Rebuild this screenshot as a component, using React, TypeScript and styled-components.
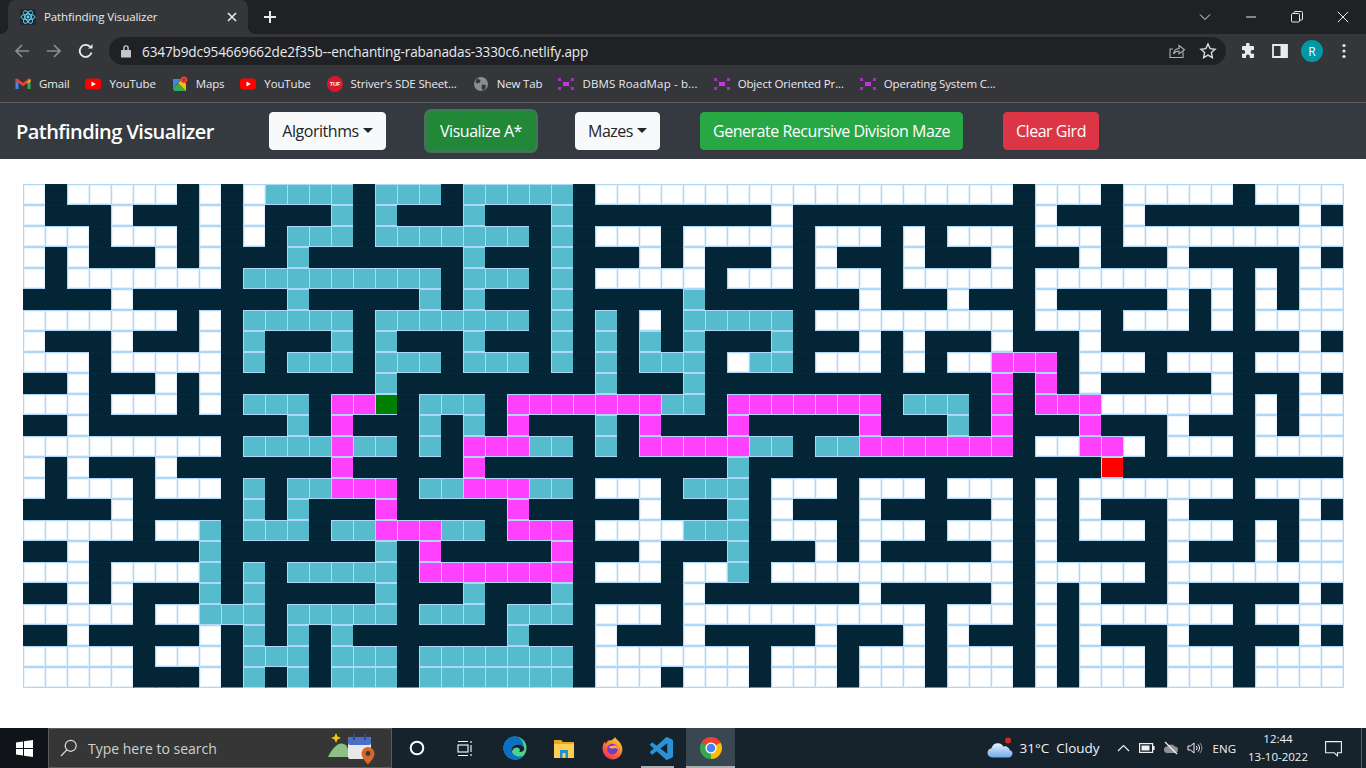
import React from "react";
import styled, { createGlobalStyle } from "styled-components";

const UI_FONT = `"Open Sans", "Noto Sans", "Liberation Sans", sans-serif`;

const Global = createGlobalStyle`
  html, body { margin: 0; padding: 0; height: 100%; background: #fff; overflow: hidden; }
  #root { height: 100%; }
  * { box-sizing: border-box; }
  body { font-family: ${UI_FONT}; }
`;

const Page = styled.div`
  width: 1366px;
  height: 768px;
  display: flex;
  flex-direction: column;
`;

/* ---------- browser chrome ---------- */
const TabStrip = styled.div`
  height: 34px;
  background: #202124;
  display: flex;
  align-items: flex-end;
  padding-left: 8px;
`;
const Tab = styled.div`
  position: relative;
  width: 240px;
  height: 34px;
  background: #35363a;
  border-radius: 8px 8px 0 0;
  display: flex;
  align-items: center;
  padding: 0 8px 0 12px;
  gap: 8px;
  &::before, &::after {
    content: "";
    position: absolute;
    bottom: 0;
    width: 8px;
    height: 8px;
  }
  &::before { left: -8px; background: radial-gradient(circle at 0 0, #202124 8px, #35363a 8.5px); }
  &::after { right: -8px; background: radial-gradient(circle at 100% 0, #202124 8px, #35363a 8.5px); }
`;
const TabTitle = styled.span`
  flex: 1;
  margin-top: -2px;
  color: #e8eaed;
  font-size: 11.5px;
  letter-spacing: -0.1px;
  white-space: nowrap;
`;
const ChromeIcon = styled.span<{ $color?: string }>`
  display: inline-flex;
  align-items: center;
  justify-content: center;
  flex: none;
  color: ${(p) => p.$color || "#e8eaed"};
`;
const NewTab = styled(ChromeIcon)`
  margin: 0 0 0 14px;
  height: 34px;
`;
const WindowControls = styled.div`
  margin-left: auto;
  height: 34px;
  display: flex;
  align-items: center;
`;
const WindowButton = styled(ChromeIcon)`
  width: 46px;
  height: 28px;
`;
const Toolbar = styled.div`
  height: 34px;
  background: #35363a;
  display: flex;
  align-items: center;
  padding-left: 12px;
`;
const NavRound = styled(ChromeIcon)`
  width: 20px;
  height: 20px;
  margin-right: 12px;
`;
const Omnibox = styled.div`
  width: 1117px;
  height: 28px;
  margin-left: 1px;
  border-radius: 14px;
  background: #202124;
  display: flex;
  align-items: center;
  padding-left: 11px;
`;
const Url = styled.span`
  color: #e8eaed;
  font-size: 13.6px;
  letter-spacing: -0.14px;
  margin-left: 10px;
  flex: 1;
  white-space: nowrap;
`;
const OmniEnd = styled.div`
  display: flex;
  align-items: center;
  gap: 13px;
  padding-right: 9px;
`;
const ToolEnd = styled.div`
  display: flex;
  align-items: center;
  margin-left: 14px;
  gap: 16px;
`;
const Avatar = styled.span`
  width: 22px;
  height: 22px;
  margin: 0 3px 0 -3px;
  border-radius: 50%;
  background: #0097a7;
  color: #fff;
  font-size: 12px;
  display: flex;
  align-items: center;
  justify-content: center;
`;
const Bookmarks = styled.div`
  height: 35px;
  background: #35363a;
  border-bottom: 1px solid #5f6062;
  display: flex;
  align-items: center;
  padding: 0 0 3px 15px;
  gap: 16px;
`;
const Bookmark = styled.div<{ $track?: number }>`
  display: flex;
  align-items: center;
  gap: 8px;
  color: #e8eaed;
  font-size: 11.5px;
  letter-spacing: ${(p) => p.$track ?? -0.15}px;
  white-space: nowrap;
`;

/* ---------- app navbar ---------- */
const Navbar = styled.nav`
  height: 56px;
  background: #343a40;
  display: flex;
  align-items: center;
  padding-left: 16px;
`;
const Brand = styled.span`
  font-size: 20px;
  font-weight: 600;
  letter-spacing: -0.55px;
  color: #fff;
  width: 253px;
  white-space: nowrap;
`;
const Actions = styled.div`
  display: flex;
  gap: 40px;
`;
const tones = {
  light: { bg: "#f8f9fa", fg: "#212529" },
  focus: { bg: "#218838", fg: "#fff" },
  success: { bg: "#28a745", fg: "#fff" },
  danger: { bg: "#dc3545", fg: "#fff" },
};
const Btn = styled.button<{ $tone: keyof typeof tones; $w: number }>`
  width: ${(p) => p.$w}px;
  height: 38px;
  margin-left: ${(p) => (p.$tone === "focus" ? 1 : 0)}px;
  border: 1px solid ${(p) => tones[p.$tone].bg};
  border-radius: 4px;
  background: ${(p) => tones[p.$tone].bg};
  color: ${(p) => tones[p.$tone].fg};
  font-family: ${UI_FONT};
  font-size: 16px;
  letter-spacing: -0.47px;
  padding: 0;
  white-space: nowrap;
  box-shadow: ${(p) => (p.$tone === "focus" ? "0 0 0 3px rgba(72,180,97,.5)" : "none")};
`;
const Caret = styled.span`
  display: inline-block;
  margin-left: 4px;
  vertical-align: 4px;
  border-top: 5px solid currentColor;
  border-left: 5px solid transparent;
  border-right: 5px solid transparent;
`;

/* ---------- maze ---------- */
const Main = styled.main`
  flex: 1;
  background: #fff;
  padding: 25px 0 0 23px;
`;
const Board = styled.div`
  display: grid;
  grid-template-columns: repeat(60, 22px);
  grid-auto-rows: 21px;
  width: 1321px;
  border-right: 1px solid #afd8f8;
`;
const cellColors = {
  ".": "#ffffff",
  W: "#032535",
  v: "#57bbce",
  p: "#ff40ff",
  S: "#008000",
  E: "#ff0000",
};
type Kind = keyof typeof cellColors;
const Cell = styled.div<{ $kind: Kind }>`
  background: ${(p) => cellColors[p.$kind]};
  border-style: solid;
  border-width: 1px 0 1px 1px;
  border-color: ${(p) => (p.$kind === "W" ? "#072a3a #032535 #032535 #032535" : "#afd8f8")};
  box-shadow: ${(p) => (p.$kind === "." ? "inset 1px 1px 0 #ecf5fd, inset -1px -1px 0 #e3f1fc" : "none")};
  &:nth-last-child(-n + 60) {
    border-bottom-color: ${(p) => (p.$kind === "W" ? "#7c8c95" : "#afd8f8")};
  }
`;

const MAZE = [
  "0. 1W 2. 7W 8. 9W 10. 11v 15W 16v 19W 20v 25W 26. 45W 46. 49W 50. 55W 56.",
  "0. 1W 4. 5W 8. 9W 10. 11W 14v 15W 16v 17W 20v 21W 24v 25W 34. 35W 46. 47W 50. 51W 58. 59W",
  "0. 3W 4. 7W 8. 9W 10. 11W 12v 15W 16v 23W 24v 25W 26. 29W 30. 35W 36. 39W 40. 41W 42. 45W 46. 49W 50.",
  "0. 1W 2. 3W 6. 7W 8. 9W 12v 13W 20v 21W 24v 25W 28. 29W 30. 31W 34. 35W 36. 37W 40. 41W 44. 45W 48. 49W 52. 53W 58. 59W",
  "0. 1W 2. 9W 10v 19W 20v 23W 24v 25W 26. 31W 32. 35W 36. 39W 40. 45W 46. 55W 56. 57W 58.",
  "0W 4. 5W 12v 13W 18v 19W 20v 21W 24v 25W 30v 31W 38. 39W 42. 43W 46. 47W 52. 53W 54. 55W 56. 57W 58.",
  "0. 7W 8. 9W 10v 15W 16v 23W 24v 25W 26v 27W 28. 29W 30v 35W 36. 45W 46. 49W 50. 53W 54. 55W 56.",
  "0. 1W 4. 5W 8. 9W 10v 11W 14v 15W 16v 17W 20v 21W 24v 25W 26v 27W 28v 29W 30v 31W 34v 35W 38. 39W 40. 41W 44. 45W 48. 49W 58. 59W",
  "0. 3W 4. 9W 10v 11W 12v 15W 16v 19W 20v 23W 24v 25W 26v 27W 28v 31W 32. 33v 35W 36. 39W 40. 41W 42. 44p 47W 48. 51W 52. 55W 56.",
  "0W 2. 3W 6. 7W 8. 9W 16v 17W 26v 27W 30v 31W 44p 45W 46p 47W 48. 49W 54. 55W 58. 59W",
  "0. 3W 4. 7W 8. 9W 10v 13W 14p 16S 17W 18v 21W 22p 29v 31W 32p 39W 40v 43W 44p 45W 46p 49. 55W 56. 57W 58.",
  "0W 2. 3W 12v 13W 14p 15W 18v 19W 20v 21W 22p 23W 26v 27W 28p 29W 32p 33W 38p 39W 42v 43W 44p 45W 48p 49W 52. 53W 56. 57W 58.",
  "0. 9W 10v 14p 15v 17W 18v 19W 20p 23v 25W 26v 27W 28p 33v 35W 36v 38p 45W 46. 48p 50. 51W 52. 55W 56.",
  "0. 1W 2. 3W 6. 7W 14p 15W 20p 21W 32v 33W 49E 50W",
  "0. 1W 2. 5W 6. 9W 10v 11W 12v 14p 17W 18v 20p 23v 25W 26. 29W 30v 33W 34. 37W 38. 41W 42. 45W 46. 47W 48. 55W 56.",
  "0W 4. 5W 10v 11W 12v 13W 16p 17W 22p 23W 28. 29W 32v 33W 34. 35W 38. 39W 44. 45W 46. 47W 48. 49W 52. 53W 58. 59W",
  "0. 5W 6. 8v 9W 10v 13W 14v 16p 19v 21W 22p 25W 26. 30v 33W 34. 37W 38. 41W 42. 45W 46. 47W 48. 51W 52. 55W 56. 57W 58.",
  "0W 2. 3W 8v 9W 16v 17W 18p 19W 24p 25W 28. 29W 32v 33W 36. 37W 38. 39W 44. 45W 46. 47W 52. 53W 56. 57W 58.",
  "0. 3W 4. 8v 9W 10v 11W 12v 17W 18p 25W 26. 29W 30. 32v 33W 34. 45W 46. 51W 52.",
  "0W 2. 3W 4. 5W 8v 9W 10v 11W 16v 17W 20v 21W 24v 25W 30. 31W 38. 39W 44. 45W 46. 47W 48. 49W 52. 53W 58. 59W",
  "0. 5W 6. 8v 11W 12v 17W 18v 21W 22v 25W 26. 29W 30. 41W 42. 45W 46. 47W 48. 55W 56.",
  "0W 2. 3W 8. 9W 10v 11W 12v 13W 14v 15W 22v 23W 26. 27W 30. 31W 36. 37W 40. 41W 42. 43W 46. 47W 48. 49W 52. 53W 58. 59W",
  "0. 5W 6. 9W 10v 13W 14v 17W 18v 25W 26. 33W 34. 37W 38. 41W 42. 45W 46. 47W 48. 51W 52. 55W 56.",
  "0. 5W 8. 9W 10v 11W 12v 13W 14v 17W 18v 25W 26. 29W 30. 33W 34. 37W 38. 41W 42. 45W 46. 47W 48. 51W 52. 55W 56.",
];

function expandRow(spec: string): Kind[] {
  const row: Kind[] = new Array(60).fill(".");
  const runs = spec.split(" ").map((t) => ({ at: parseInt(t, 10), kind: t.slice(-1) as Kind }));
  runs.forEach((r, i) => {
    const end = i + 1 < runs.length ? runs[i + 1].at : 60;
    for (let c = r.at; c < end; c++) row[c] = r.kind;
  });
  return row;
}
const cells = MAZE.flatMap(expandRow);

/* ---------- taskbar ---------- */
const Taskbar = styled.footer`
  height: 40px;
  background: #16222c;
  display: flex;
  align-items: center;
  color: #fff;
`;
const StartButton = styled.div`
  width: 48px;
  height: 40px;
  background: #101318;
  display: flex;
  align-items: center;
  justify-content: center;
`;
const SearchBox = styled.div`
  width: 344px;
  height: 40px;
  background: #363636;
  border: 1px solid #5c5c5c;
  display: flex;
  align-items: center;
  padding: 0 13px 0 11px;
`;
const SearchText = styled.span`
  margin-left: 10px;
  flex: 1;
  font-size: 14px;
  color: #d0d0d0;
  white-space: nowrap;
`;
const TaskIcon = styled.div<{ $active?: boolean; $running?: boolean }>`
  position: relative;
  width: 49px;
  height: 40px;
  display: flex;
  align-items: center;
  justify-content: center;
  background: ${(p) => (p.$active ? "#3b4750" : "transparent")};
  &::after {
    content: "";
    display: ${(p) => (p.$active || p.$running ? "block" : "none")};
    position: absolute;
    bottom: 0;
    left: ${(p) => (p.$active ? 0 : "4px")};
    right: ${(p) => (p.$active ? 0 : "12px")};
    height: 2px;
    background: #a9b0b5;
  }
`;
const Tray = styled.div`
  margin-left: auto;
  height: 40px;
  display: flex;
  align-items: center;
  padding-right: 4px;
`;
const Weather = styled.span`
  font-size: 13.5px;
  color: #f2f2f2;
  white-space: nowrap;
  margin-left: 7px;
`;
const TrayIcon = styled.span<{ $left: number }>`
  display: inline-flex;
  margin-left: ${(p) => p.$left}px;
  color: #f2f2f2;
`;
const Lang = styled.span`
  font-size: 11.5px;
  color: #f2f2f2;
  margin-left: 10px;
`;
const Clock = styled.div`
  width: 70px;
  margin-left: 7px;
  text-align: center;
  font-size: 11.5px;
  line-height: 18px;
  color: #f2f2f2;
`;
const EndEdge = styled.div`
  width: 1px;
  height: 40px;
  margin-left: 19px;
  background: #56616a;
`;

/* ---------- drawn icons ---------- */
const ReactFav = () => (
  <svg width="16" height="16" viewBox="0 0 16 16">
    <rect width="16" height="16" rx="2" fill="#20292f" />
    <g fill="none" stroke="#61dafb" strokeWidth="0.9">
      <ellipse cx="8" cy="8" rx="7" ry="2.8" />
      <ellipse cx="8" cy="8" rx="7" ry="2.8" transform="rotate(60 8 8)" />
      <ellipse cx="8" cy="8" rx="7" ry="2.8" transform="rotate(120 8 8)" />
    </g>
    <circle cx="8" cy="8" r="1.4" fill="#61dafb" />
  </svg>
);
const Gmail = () => (
  <svg width="16" height="16" viewBox="0 0 16 16">
    <rect x="0.5" y="3" width="3" height="10" fill="#4285f4" />
    <rect x="12.5" y="3" width="3" height="10" fill="#34a853" />
    <path d="M1 3.4 8 8.6 15 3.4" fill="none" stroke="#ea4335" strokeWidth="2.6" />
    <path d="M12.5 5.5 15.5 3.2V5.5L12.5 7.6Z" fill="#fbbc04" />
  </svg>
);
const YouTube = () => (
  <svg width="16" height="16" viewBox="0 0 16 16">
    <rect y="2.5" width="16" height="11" rx="3" fill="#f00" />
    <path d="M6.5 5.5 10.8 8 6.5 10.5Z" fill="#fff" />
  </svg>
);
const Maps = () => (
  <svg width="16" height="16" viewBox="0 0 16 16">
    <path d="M1 3 9 3 1 12Z" fill="#4285f4" />
    <path d="M1 12 6 7 14 15H2Z" fill="#34a853" />
    <path d="M6 7 10 3 14 8V15Z" fill="#fbbc04" />
    <circle cx="12" cy="3.8" r="3.3" fill="#ea4335" />
    <circle cx="12" cy="3.8" r="1.2" fill="#a52714" />
  </svg>
);
const Tuf = () => (
  <svg width="16" height="16" viewBox="0 0 16 16">
    <circle cx="8" cy="8" r="8" fill="#d8192d" />
    <text x="8" y="10" fontSize="5.6" fontWeight="700" fill="#fff" textAnchor="middle" fontFamily="Liberation Sans">TUF</text>
  </svg>
);
const Globe = () => (
  <svg width="16" height="16" viewBox="0 0 16 16">
    <circle cx="8" cy="8" r="7" fill="#8a8d91" />
    <path d="M4 2.5 7.5 4 7 6.5 4 7.5 2.5 6ZM9 8.5 13 9 12 13 9.5 14.5 8.5 11.5Z" fill="#35363a" />
  </svg>
);
const RoadMap = () => (
  <svg width="16" height="16" viewBox="0 0 16 16">
    <g fill="#a62fc0">
      <rect x="0" y="2" width="3" height="3" />
      <rect x="13" y="2" width="3" height="3" />
      <rect x="0" y="11" width="3" height="3" />
      <rect x="13" y="11" width="3" height="3" />
      <rect x="5" y="6" width="6" height="4" fill="#c237dd" />
    </g>
    <path d="M3 4 5 6M13 4 11 6M3 12 5 10M13 12 11 10" stroke="#6a2a7a" strokeWidth="1" />
  </svg>
);
const WindowsLogo = () => (
  <svg width="17" height="17" viewBox="0 0 17 17" fill="#fff">
    <path d="M0 2.4 7 1.4V8H0ZM8 1.3 17 0V8H8ZM0 9H7V15.6L0 14.6ZM8 9H17V17L8 15.7Z" />
  </svg>
);
const Magnifier = () => (
  <svg width="18" height="18" viewBox="0 0 18 18" fill="none" stroke="#e0e0e0" strokeWidth="1.2">
    <circle cx="10.7" cy="6.8" r="5.5" />
    <path d="M6.8 10.8 1 17" />
  </svg>
);
const CalendarWidget = () => (
  <svg width="50" height="34" viewBox="0 0 50 34">
    <path d="M0 26 C6 14 12 10 18 14 L24 26Z" fill="#8cc084" />
    <path d="M8 2 L9.5 5.5 13 7 9.5 8.5 8 12 6.5 8.5 3 7 6.5 5.5Z" fill="#f2c311" />
    <rect x="20" y="6" width="23" height="22" rx="2" fill="#e8e8e8" />
    <rect x="20" y="6" width="23" height="8" rx="2" fill="#4a6fc4" />
    <rect x="25" y="3" width="2" height="6" fill="#2c4a94" />
    <rect x="36" y="3" width="2" height="6" fill="#2c4a94" />
    <path d="M40 16 A6.5 6.5 0 0 1 46.5 22.5 C46.5 27 42 31 40 33.5 C38 31 33.5 27 33.5 22.5 A6.5 6.5 0 0 1 40 16Z" fill="#d9662a" />
    <circle cx="40" cy="22.5" r="2.4" fill="#3a3a3a" />
  </svg>
);
const Cortana = () => (
  <svg width="16" height="16" viewBox="0 0 16 16">
    <circle cx="8" cy="8" r="6.3" fill="none" stroke="#fff" strokeWidth="2" />
  </svg>
);
const TaskView = () => (
  <svg width="17" height="17" viewBox="0 0 17 17" fill="none" stroke="#fff" strokeWidth="1.1">
    <rect x="1" y="5" width="10" height="7" />
    <path d="M1 1.5H11M1 15.5H11M14 1V3M14 5V12M14 14V16" />
  </svg>
);
const Edge = () => (
  <svg width="24" height="24" viewBox="0 0 24 24">
    <defs>
      <linearGradient id="edgeA" x1="0" y1="0" x2="1" y2="1">
        <stop offset="0" stopColor="#37c6d0" />
        <stop offset="1" stopColor="#5ad76e" />
      </linearGradient>
    </defs>
    <circle cx="12" cy="12" r="11.5" fill="url(#edgeA)" />
    <path d="M12 .5C5.5 .5.5 5.6.5 12c0 6.4 5 11.5 11.5 11.5 3.4 0 6.4-1.4 8.6-3.8-4.8 1.7-10 .2-11.6-3.8-1.2-3.1.4-6.3 3.7-7.2 3-.8 6 .2 8 2.2C20.5 5.2 16.8.5 12 .5Z" fill="#0c70c4" />
    <path d="M8.8 15.9c-1-3.4 1-6.5 4.4-7.2 2.6-.5 5.4.3 7.3 2.1.8 1 1 2.5.2 3.7-1 1.4-3 1.6-4.6 1.3 1-1 1-2.4.1-3.3-2.1-2-6.4-.8-7.4 3.4Z" fill="#16222c" />
  </svg>
);
const Folder = () => (
  <svg width="22" height="22" viewBox="0 0 22 22">
    <path d="M1 3H8L10 5H21V10H1Z" fill="#e9a825" />
    <rect x="1" y="7" width="20" height="14" fill="#ffcf52" />
    <rect x="7" y="13" width="8" height="8" fill="#1f8fd6" />
    <rect x="9.5" y="16" width="3" height="5" fill="#ffcf52" />
  </svg>
);
const Firefox = () => (
  <svg width="24" height="24" viewBox="0 0 24 24">
    <defs>
      <linearGradient id="ffA" x1="0.8" y1="0" x2="0.2" y2="1">
        <stop offset="0" stopColor="#ffd23a" />
        <stop offset="0.5" stopColor="#ff7a2a" />
        <stop offset="1" stopColor="#e8286b" />
      </linearGradient>
    </defs>
    <path d="M14 .8c.5 2.4 2.5 3 4 4.6 3.2 3.2 4.4 8 2.6 12.2C18.8 21.4 15.4 23.5 12 23.5 6 23.5 1.5 18.6 1.5 12.6c0-2.6.8-5 2.4-7 .1 1 .5 1.8 1 2.4C5.6 5.2 8 3.8 10 4.4 11.5 3.5 13.4 2.6 14 .8Z" fill="url(#ffA)" />
    <circle cx="11.5" cy="13" r="5.3" fill="#7539c7" />
    <path d="M8 10c2 1 2.5-1 6-.5 2 .6 3 2 3 3.5-2-1.5-3.5-1-5-.5C10 12.8 8 12 8 10Z" fill="#ffb03a" />
  </svg>
);
const VsCode = () => (
  <svg width="23" height="23" viewBox="0 0 24 24" fill="#2c92d8">
    <path d="M23.15 2.587L18.21.21a1.494 1.494 0 0 0-1.705.29l-9.46 8.63-4.12-3.128a.999.999 0 0 0-1.276.057L.327 7.261A1 1 0 0 0 .326 8.74L3.899 12 .326 15.26a1 1 0 0 0 .001 1.479L1.65 17.94a.999.999 0 0 0 1.276.057l4.12-3.128 9.46 8.63a1.492 1.492 0 0 0 1.704.29l4.942-2.377A1.5 1.5 0 0 0 24 20.06V3.939a1.5 1.5 0 0 0-.85-1.352zm-5.146 14.861L10.826 12l7.178-5.448v10.896z" />
  </svg>
);
const Chrome = () => (
  <svg width="24" height="24" viewBox="0 0 24 24">
    <path d="M12 12 2.47 6.5A11 11 0 0 1 21.53 6.5Z" fill="#ea4335" />
    <path d="M12 12 21.53 6.5A11 11 0 0 1 12 23Z" fill="#fbbc04" />
    <path d="M12 12 12 23A11 11 0 0 1 2.47 6.5Z" fill="#34a853" />
    <circle cx="12" cy="12" r="5.6" fill="#fff" />
    <circle cx="12" cy="12" r="4.3" fill="#4285f4" />
  </svg>
);
const CloudIcon = () => (
  <svg width="26" height="22" viewBox="0 0 26 22">
    <defs>
      <linearGradient id="cloudA" x1="0" y1="0" x2="0" y2="1">
        <stop offset="0" stopColor="#e8f3ff" />
        <stop offset="1" stopColor="#6fa9e8" />
      </linearGradient>
    </defs>
    <path d="M5.5 20.5C2.5 20.5.5 18.3.5 15.8c0-2.4 1.8-4.3 4-4.6C5.2 8 8 6 11 6.2c2.6.1 4.5 1.5 5.4 3.5 1-.5 2.4-.5 3.5 0 1.6.7 2.7 2 3 3.6 1.6.3 2.6 1.6 2.6 3.3 0 2.2-1.8 4-4 4Z" fill="url(#cloudA)" />
    <circle cx="21" cy="3.5" r="3" fill="#d5281e" />
  </svg>
);

const G = (props: React.SVGProps<SVGSVGElement>) => (
  <svg fill="none" stroke="currentColor" strokeWidth="1.5" {...props} />
);

const BackArrow = () => (
  <G width="18" height="18" viewBox="0 0 18 18" strokeWidth="1.7"><path d="M16 9H3M9 3 3 9l6 6" /></G>
);
const ForwardArrow = () => (
  <G width="18" height="18" viewBox="0 0 18 18" strokeWidth="1.7"><path d="M2 9H15M9 3l6 6-6 6" /></G>
);
const Reload = () => (
  <G width="18" height="18" viewBox="0 0 18 18" strokeWidth="1.8">
    <path d="M14.5 10.5A6 6 0 1 1 13 4.7" />
    <path d="M15.5 2V6.5H11Z" fill="currentColor" stroke="none" />
  </G>
);

export default function App() {
  return (
    <Page>
      <Global />
      <TabStrip>
        <Tab>
          <ReactFav />
          <TabTitle>Pathfinding Visualizer</TabTitle>
          <ChromeIcon>
            <G width="16" height="16" viewBox="0 0 16 16" strokeWidth="1.6"><path d="M4 4 12 12M12 4 4 12" /></G>
          </ChromeIcon>
        </Tab>
        <NewTab>
          <G width="16" height="16" viewBox="0 0 16 16" strokeWidth="2"><path d="M8 2V14M2 8H14" /></G>
        </NewTab>
        <WindowControls>
          <WindowButton>
            <G width="12" height="12" viewBox="0 0 12 12" strokeWidth="1"><path d="M1 3.5 6 8.5 11 3.5" /></G>
          </WindowButton>
          <WindowButton>
            <G width="12" height="12" viewBox="0 0 12 12" strokeWidth="1"><path d="M1 6H11" /></G>
          </WindowButton>
          <WindowButton>
            <G width="12" height="12" viewBox="0 0 12 12" strokeWidth="1"><rect x=".5" y="2.5" width="8" height="8.5" rx="1" /><path d="M3 2.5V1.5A1 1 0 0 1 4 .5H10.5A1 1 0 0 1 11.5 1.5V8A1 1 0 0 1 10.5 9H8.5" /></G>
          </WindowButton>
          <WindowButton>
            <G width="12" height="12" viewBox="0 0 12 12" strokeWidth="1"><path d="M.8 .8 11.2 11.2M11.2 .8 .8 11.2" /></G>
          </WindowButton>
        </WindowControls>
      </TabStrip>
      <Toolbar>
        <NavRound $color="#8a8d91"><BackArrow /></NavRound>
        <NavRound $color="#8a8d91"><ForwardArrow /></NavRound>
        <NavRound $color="#e8eaed"><Reload /></NavRound>
        <Omnibox>
          <ChromeIcon $color="#c4c7c9">
            <svg width="12" height="14" viewBox="0 0 12 14" fill="currentColor">
              <path d="M3.2 6V4a2.8 2.8 0 0 1 5.6 0V6H10.5A.5.5 0 0 1 11 6.5V13a.5.5 0 0 1-.5.5H1.5A.5.5 0 0 1 1 13V6.5A.5.5 0 0 1 1.5 6ZM4.6 6H7.4V4a1.4 1.4 0 0 0-2.8 0Z" />
            </svg>
          </ChromeIcon>
          <Url>6347b9dc954669662de2f35b--enchanting-rabanadas-3330c6.netlify.app</Url>
          <OmniEnd>
            <ChromeIcon $color="#aeb1b5">
              <G width="18" height="18" viewBox="0 0 18 18" strokeWidth="1.1">
                <path d="M15 9.5V15.5H2V7H5" />
                <path d="M5.5 12C6 8.5 8.5 6.6 11 6.5V3.5L16.5 7.8 11 12V9C9 9 7 10 5.5 12Z" />
              </G>
            </ChromeIcon>
            <ChromeIcon $color="#dadce0">
              <G width="18" height="18" viewBox="0 0 18 18" strokeWidth="1.4">
                <path d="M9 2 11.1 6.6 16.1 7.2 12.4 10.6 13.4 15.6 9 13.1 4.6 15.6 5.6 10.6 1.9 7.2 6.9 6.6Z" />
              </G>
            </ChromeIcon>
          </OmniEnd>
        </Omnibox>
        <ToolEnd>
          <ChromeIcon>
            <svg width="16" height="16" viewBox="0 0 16 16" fill="currentColor">
              <path d="M6 1.5A1.8 1.8 0 0 1 9.6 1.5V3H13A1 1 0 0 1 14 4V7H12.5A1.9 1.9 0 0 0 12.5 10.8H14V14A1 1 0 0 1 13 15H9.8V13.5A1.9 1.9 0 0 0 6 13.5V15H3A1 1 0 0 1 2 14V10.8H3.3A1.9 1.9 0 0 0 3.3 7H2V4A1 1 0 0 1 3 3H6Z" />
            </svg>
          </ChromeIcon>
          <ChromeIcon>
            <svg width="16" height="14" viewBox="0 0 16 14">
              <path d="M1 1H15V13H1Z" fill="none" stroke="currentColor" strokeWidth="1.8" />
              <rect x="8.5" y="1" width="6.5" height="12" fill="currentColor" />
            </svg>
          </ChromeIcon>
          <Avatar>R</Avatar>
          <ChromeIcon>
            <svg width="4" height="16" viewBox="0 0 4 16" fill="currentColor">
              <circle cx="2" cy="2.5" r="1.6" />
              <circle cx="2" cy="8" r="1.6" />
              <circle cx="2" cy="13.5" r="1.6" />
            </svg>
          </ChromeIcon>
        </ToolEnd>
      </Toolbar>
      <Bookmarks>
        <Bookmark><Gmail />Gmail</Bookmark>
        <Bookmark><YouTube />YouTube</Bookmark>
        <Bookmark><Maps />Maps</Bookmark>
        <Bookmark><YouTube />YouTube</Bookmark>
        <Bookmark><Tuf />Striver's SDE Sheet...</Bookmark>
        <Bookmark><Globe />New Tab</Bookmark>
        <Bookmark $track={0.15}><RoadMap />DBMS RoadMap - b...</Bookmark>
        <Bookmark><RoadMap />Object Oriented Pr...</Bookmark>
        <Bookmark><RoadMap />Operating System C...</Bookmark>
      </Bookmarks>
      <Navbar>
        <Brand>Pathfinding Visualizer</Brand>
        <Actions>
          <Btn $tone="light" $w={117}>Algorithms<Caret /></Btn>
          <Btn $tone="focus" $w={108}>Visualize A*</Btn>
          <Btn $tone="light" $w={85}>Mazes<Caret /></Btn>
          <Btn $tone="success" $w={263}>Generate Recursive Division Maze</Btn>
          <Btn $tone="danger" $w={96}>Clear Gird</Btn>
        </Actions>
      </Navbar>
      <Main>
        <Board>
          {cells.map((kind, i) => (
            <Cell key={i} $kind={kind} />
          ))}
        </Board>
      </Main>
      <Taskbar>
        <StartButton><WindowsLogo /></StartButton>
        <SearchBox>
          <Magnifier />
          <SearchText>Type here to search</SearchText>
          <CalendarWidget />
        </SearchBox>
        <TaskIcon><Cortana /></TaskIcon>
        <TaskIcon><TaskView /></TaskIcon>
        <TaskIcon><Edge /></TaskIcon>
        <TaskIcon><Folder /></TaskIcon>
        <TaskIcon><Firefox /></TaskIcon>
        <TaskIcon $running><VsCode /></TaskIcon>
        <TaskIcon $active><Chrome /></TaskIcon>
        <Tray>
          <CloudIcon />
          <Weather>31°C</Weather>
          <Weather>Cloudy</Weather>
          <TrayIcon $left={17}>
            <G width="13" height="13" viewBox="0 0 13 13" strokeWidth="1.2"><path d="M1 9 6.5 3.5 12 9" /></G>
          </TrayIcon>
          <TrayIcon $left={9}>
            <svg width="16" height="10" viewBox="0 0 16 10">
              <rect x=".6" y=".6" width="13" height="8.8" fill="none" stroke="currentColor" strokeWidth="1.2" />
              <rect x="2.5" y="2.5" width="8" height="5" fill="currentColor" />
              <rect x="14" y="3" width="1.6" height="4" fill="currentColor" />
            </svg>
          </TrayIcon>
          <TrayIcon $left={8}>
            <svg width="16" height="16" viewBox="0 0 16 16">
              <path d="M1 10A3 3 0 0 1 4 6.5 5 5 0 0 1 12 6.5 3 3 0 0 1 15 10 3 3 0 0 1 12.5 13H3.5A3 3 0 0 1 1 10Z" fill="#8f9397" />
              <path d="M2 2 14 14" stroke="#f2f2f2" strokeWidth="1.2" />
            </svg>
          </TrayIcon>
          <TrayIcon $left={8}>
            <G width="16" height="16" viewBox="0 0 16 16" strokeWidth="1"><path d="M1 6H3.5L7 3V13L3.5 10H1ZM9.3 6A3 3 0 0 1 9.3 10M11 4.4A5.5 5.5 0 0 1 11 11.6" /><path d="M13 3A8 8 0 0 1 13 13" stroke="#8f9397" /></G>
          </TrayIcon>
          <Lang>ENG</Lang>
          <Clock>12:44<br />13-10-2022</Clock>
          <TrayIcon $left={12}>
            <G width="17" height="17" viewBox="0 0 17 17" strokeWidth="1.1"><path d="M.6 1.6H16.4V12.8H12.5V15.8L9.2 12.8H.6Z" /></G>
          </TrayIcon>
          <EndEdge />
        </Tray>
      </Taskbar>
    </Page>
  );
}
